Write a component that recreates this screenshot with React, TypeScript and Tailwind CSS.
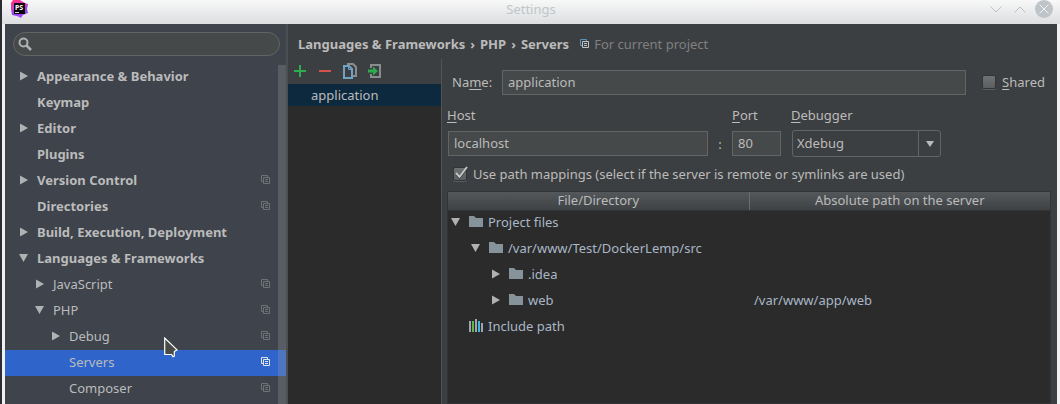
import React, { useState } from "react";

type NavItem = {
  label: string;
  level: 0 | 1 | 2;
  arrow?: "open" | "closed";
  project?: boolean;
  selected?: boolean;
};

const navItems: NavItem[] = [
  { label: "Appearance & Behavior", level: 0, arrow: "closed" },
  { label: "Keymap", level: 0 },
  { label: "Editor", level: 0, arrow: "closed" },
  { label: "Plugins", level: 0 },
  { label: "Version Control", level: 0, arrow: "closed", project: true },
  { label: "Directories", level: 0, project: true },
  { label: "Build, Execution, Deployment", level: 0, arrow: "closed" },
  { label: "Languages & Frameworks", level: 0, arrow: "open" },
  { label: "JavaScript", level: 1, arrow: "closed", project: true },
  { label: "PHP", level: 1, arrow: "open", project: true },
  { label: "Debug", level: 2, arrow: "closed", project: true },
  { label: "Servers", level: 2, project: true, selected: true },
  { label: "Composer", level: 2, project: true },
];

const navIndent = ["pl-[14px]", "pl-[30px]", "pl-[46px]"];

type FileRow = {
  label: string;
  level: 0 | 1 | 2;
  arrow?: "open" | "closed";
  icon: "folder" | "library";
  server?: string;
};

const fileRows: FileRow[] = [
  { label: "Project files", level: 0, arrow: "open", icon: "folder" },
  { label: "/var/www/Test/DockerLemp/src", level: 1, arrow: "open", icon: "folder" },
  { label: ".idea", level: 2, arrow: "closed", icon: "folder" },
  { label: "web", level: 2, arrow: "closed", icon: "folder", server: "/var/www/app/web" },
  { label: "Include path", level: 0, icon: "library" },
];

const fileIndent = ["pl-[3px]", "pl-[23px]", "pl-[43px]"];

function Arrow({ state }: { state?: "open" | "closed" }) {
  return (
    <svg className="size-[10px] shrink-0" viewBox="0 0 10 10" fill="#afb1b3" aria-hidden="true">
      {state === "closed" && <path d="M1 .5 9 5 1 9.500z" />}
      {state === "open" && <path d="M0 1h9L4.500 9z" />}
    </svg>
  );
}

function ProjectIcon({ front, back = front }: { front: string; back?: string }) {
  return (
    <svg className="size-[10px] shrink-0" viewBox="0 0 10 10" fill="none" aria-hidden="true">
      <path d="M2 6.500H.5v-6h6V2" stroke={back} />
      <path d="M2.500 2.500h6v6h-6zM4 4.500h3M4 6.500h3" stroke={front} />
    </svg>
  );
}

function FolderIcon() {
  return (
    <svg className="h-3 w-[14px] shrink-0" viewBox="0 0 14 12" fill="#87939a" aria-hidden="true">
      <path d="M0 0h5l2 2h7v9H0z" />
    </svg>
  );
}

function LibraryIcon() {
  return (
    <svg className="h-[14px] w-[14px] shrink-0" viewBox="0 0 14 14" aria-hidden="true">
      <path d="M0 2h2v11H0zM6 0h2v13H6zM12 4h2v9h-2z" fill="#9aa7b0" />
      <path d="M3 2h2v11H3z" fill="#62b543" />
      <path d="M9 2h2v11H9z" fill="#40b6e0" />
    </svg>
  );
}

function AppLogo() {
  return (
    <svg className="size-5 shrink-0" viewBox="0 0 20 20" role="img" aria-label="PhpStorm">
      <defs>
        <linearGradient id="logo" x1="0.3" y1="0" x2="0.6" y2="1">
          <stop offset="0" stopColor="#ff318c" />
          <stop offset="0.35" stopColor="#d93ac0" />
          <stop offset="0.7" stopColor="#8b45f8" />
          <stop offset="1" stopColor="#b74af7" />
        </linearGradient>
      </defs>
      <path d="M2 3 4 0h7l5 3 3 1-1 5 1 4-5 2-2 3-4-2-5-1-1-6z" fill="url(#logo)" />
      <path d="M5 3h11v11H5z" fill="#0b0508" />
      <text x="6" y="9.500" fontSize="7" fontWeight="700" fontFamily="Noto Sans, sans-serif" fill="#fff">
        PS
      </text>
      <path d="M6 12h4v1H6z" fill="#ddd" />
    </svg>
  );
}

function TitleBar() {
  return (
    <header className="grid h-6 grid-cols-[1fr_auto_1fr] items-start bg-linear-to-b from-[#f8f8f8] to-[#dcdee0] px-[7px]">
      <AppLogo />
      <h1 className="leading-[18px] text-[#c0c5c8]">Settings</h1>
      <div className="flex items-center justify-end gap-[6px]">
        <button type="button" aria-label="Minimize" className="flex size-[18px] items-center justify-center">
          <svg className="h-[7px] w-3" viewBox="0 0 12 7" fill="none" stroke="#bcc1c4">
            <path d="m.5.5 5.500 5.500 5.500-5.500" />
          </svg>
        </button>
        <button type="button" aria-label="Maximize" className="flex size-[18px] items-center justify-center">
          <svg className="h-[7px] w-3" viewBox="0 0 12 7" fill="none" stroke="#bcc1c4">
            <path d="M.5 6.500 6 1l5.500 5.500" />
          </svg>
        </button>
        <button type="button" aria-label="Close" className="size-[18px]">
          <svg className="size-[18px]" viewBox="0 0 18 18">
            <circle cx="9" cy="9" r="9" fill="#bec4c7" />
            <path d="m4.500 4.500 9 9m0-9-9 9" stroke="#f2f3f4" />
          </svg>
        </button>
      </div>
    </header>
  );
}

function Sidebar() {
  return (
    <aside className="relative flex w-[283px] shrink-0 flex-col border-r-2 border-[#4b4f54] bg-[#3e434c]">
      <label className="mt-2 mr-[6px] ml-2 flex h-6 items-center gap-2 rounded-full border border-[#646464] bg-[#45494a] pl-1">
        <svg className="size-[14px] shrink-0" viewBox="0 0 14 14" fill="none" stroke="#afb1b3" aria-hidden="true">
          <circle cx="5.500" cy="5.500" r="4" strokeWidth="2" />
          <path d="m8.500 8.500 4.500 4.500" strokeWidth="2.500" />
        </svg>
        <input type="search" aria-label="Search settings" className="min-w-0 flex-1 bg-transparent outline-none" />
      </label>
      <nav aria-label="Settings sections" className="mt-2">
        <ul>
          {navItems.map((item) => (
            <li key={item.label}>
              <button
                type="button"
                aria-current={item.selected ? "page" : undefined}
                className={`flex h-[26px] w-full items-center gap-2 pr-[15px] pb-[2px] text-left ${navIndent[item.level]} ${
                  item.level === 0 ? "font-bold" : ""
                } ${item.selected ? "bg-[#2f65ca]" : ""}`}
              >
                <Arrow state={item.arrow} />
                <span className="flex-1 whitespace-nowrap">{item.label}</span>
                {item.project && <ProjectIcon front={item.selected ? "#dfe3ea" : "#6c7278"} />}
              </button>
            </li>
          ))}
        </ul>
      </nav>
      <div className="absolute top-[41px] right-0 bottom-0 w-2 bg-[#a6a6a6]/25" />
      <svg className="absolute top-[313px] left-[159px] h-[21px] w-[14px]" viewBox="0 0 14 21" aria-hidden="true">
        <path d="M.7 1v16.500h6.800L9 19.700l1.300-.6v-4.600l2.700-1.700z" fill="#4a4a48" stroke="#fff" strokeWidth="1.200" />
      </svg>
    </aside>
  );
}

function ServerList() {
  const tool = "flex size-4 items-center justify-center";
  return (
    <section aria-label="Server list" className="flex w-[153px] shrink-0 flex-col">
      <div className="flex h-[25px] items-center gap-[9px] pb-[2px] pl-1">
        <button type="button" aria-label="Add" className={tool}>
          <svg className="size-4" viewBox="0 0 16 16" fill="none" stroke="#2fab4f" strokeWidth="2">
            <path d="M8 2v12M2 8h12" />
          </svg>
        </button>
        <button type="button" aria-label="Remove" className={tool}>
          <svg className="size-4" viewBox="0 0 16 16" fill="none" stroke="#d2544a" strokeWidth="2">
            <path d="M2 8h12" />
          </svg>
        </button>
        <button type="button" aria-label="Copy" className={tool}>
          <svg className="size-4" viewBox="0 0 16 16" fill="none">
            <path d="M5 1h6l3 3v9h-3" stroke="#8a8d8f" strokeWidth="2" />
            <path d="M2 3h5l3 3v9H2z" fill="#3c3f41" stroke="#6fa3c4" strokeWidth="2" />
            <path d="M6.500 3v3.500H10" stroke="#6fa3c4" />
          </svg>
        </button>
        <button type="button" aria-label="Import" className={tool}>
          <svg className="size-4" viewBox="0 0 16 16" fill="none">
            <path d="M4 5V2h9v12H4v-3" stroke="#8a8d8f" strokeWidth="2" />
            <path d="M1 6.500h5V3.500L11 8l-5 4.500v-3H1z" fill="#2fab4f" />
          </svg>
        </button>
      </div>
      <ul className="flex-1 bg-[#2b2b2b]">
        <li>
          <button type="button" className="h-[22px] w-full bg-[#0d293e] pl-[23px] text-left">
            application
          </button>
        </li>
      </ul>
    </section>
  );
}

function Mnemonic({ children }: { children: string }) {
  return <span className="underline decoration-1 underline-offset-2">{children}</span>;
}

const field = "h-[25px] min-w-0 border border-[#646464] bg-[#45494a] px-[5px] pb-[2px] outline-none";

function CheckBox({ id, checked, onChange }: { id: string; checked: boolean; onChange: (value: boolean) => void }) {
  return (
    <span className="relative size-[14px] shrink-0">
      <input
        id={id}
        type="checkbox"
        checked={checked}
        onChange={(e) => onChange(e.target.checked)}
        className="block size-[14px] appearance-none rounded-xs border border-[#323435] bg-linear-to-b from-[#6f7173] to-[#5c5e5f] shadow-[0_1px_0_#5a5d5f]"
      />
      {checked && (
        <svg
          className="pointer-events-none absolute -top-px left-0 size-[15px]"
          viewBox="0 0 15 15"
          fill="none"
          aria-hidden="true"
        >
          <path d="m3 8 3.500 4L14 2" stroke="#2e3031" strokeWidth="2" />
          <path d="m3 7 3.500 4L14 1" stroke="#c4c5c6" strokeWidth="2" />
        </svg>
      )}
    </span>
  );
}

function ServerForm() {
  const [name, setName] = useState("application");
  const [host, setHost] = useState("localhost");
  const [port, setPort] = useState("80");
  const [shared, setShared] = useState(false);
  const [mapped, setMapped] = useState(true);
  const head = "h-[18px] border-[#323435] bg-linear-to-b from-[#54585b] to-[#3f4244] p-0 font-normal leading-[17px]";

  return (
    <form className="flex min-w-0 flex-1 flex-col border-l border-[#515456] pt-[11px] pr-[6px] pl-[5px]">
      <div className="flex items-center pr-[6px] pl-[5px]">
        <label htmlFor="name" className="w-[50px] shrink-0 pb-[2px]">
          Na<Mnemonic>m</Mnemonic>e:
        </label>
        <input id="name" value={name} onChange={(e) => setName(e.target.value)} className={`${field} flex-1`} />
        <div className="ml-4 flex items-center gap-[6px] pb-px">
          <CheckBox id="shared" checked={shared} onChange={setShared} />
          <label htmlFor="shared">
            <Mnemonic>S</Mnemonic>hared
          </label>
        </div>
      </div>

      <div className="mt-[11px] grid grid-cols-[261px_24px_49px_149px] items-center gap-y-[6px]">
        <label htmlFor="host">
          <Mnemonic>H</Mnemonic>ost
        </label>
        <span />
        <label htmlFor="port">
          <Mnemonic>P</Mnemonic>ort
        </label>
        <label htmlFor="debugger" className="pl-[10px]">
          <Mnemonic>D</Mnemonic>ebugger
        </label>
        <input id="host" value={host} onChange={(e) => setHost(e.target.value)} className={`${field} ml-px`} />
        <span className="text-center">:</span>
        <input id="port" value={port} onChange={(e) => setPort(e.target.value)} className={field} />
        <div className="relative ml-[11px] w-[149px]">
          <select
            id="debugger"
            defaultValue="Xdebug"
            className="block h-[27px] w-full appearance-none rounded-[3px] border border-[#646464] bg-[#3c3f41] px-1 pb-[2px] outline-none"
          >
            <option>Xdebug</option>
            <option>Zend Debugger</option>
          </select>
          <span className="pointer-events-none absolute inset-y-0 right-0 flex w-[23px] items-center justify-center border-l border-[#646464]">
            <svg className="h-[6px] w-2" viewBox="0 0 8 6" fill="#bbbbbb" aria-hidden="true">
              <path d="M0 0h8L4 6z" />
            </svg>
          </span>
        </div>
      </div>

      <div className="mt-2 flex items-center gap-[6px] pl-[6px]">
        <CheckBox id="mappings" checked={mapped} onChange={setMapped} />
        <label htmlFor="mappings">Use path mappings (select if the server is remote or symlinks are used)</label>
      </div>

      <div className="mt-2 flex-1 border border-[#323435] bg-[#2b2b2b]">
        <table className="w-full table-fixed border-collapse">
          <thead>
            <tr>
              <th className={`${head} border-r border-r-[#6a6d6f] border-b`}>File/Directory</th>
              <th className={`${head} border-b`}>Absolute path on the server</th>
            </tr>
          </thead>
          <tbody className="text-[#a9b7c6]">
            {fileRows.map((row) => (
              <tr key={row.label} className="h-[26px]">
                <td className="p-0 pb-[2px]">
                  <div className={`flex items-center ${fileIndent[row.level]}`}>
                    <Arrow state={row.arrow} />
                    <span className="mr-[5px] ml-2">{row.icon === "folder" ? <FolderIcon /> : <LibraryIcon />}</span>
                    <span className="whitespace-nowrap">{row.label}</span>
                  </div>
                </td>
                <td className="p-0 pb-[2px] pl-[5px]">{row.server}</td>
              </tr>
            ))}
          </tbody>
        </table>
      </div>
    </form>
  );
}

export default function App() {
  return (
    <div className="flex min-h-screen bg-[#2b2d30] pl-[2px] font-['Noto_Sans',sans-serif] text-[13px] leading-[18px] text-[#bbbbbb]">
      <div className="flex min-w-0 flex-1 flex-col bg-[#eff0f1]">
        <TitleBar />
        <div className="flex flex-1 px-[3px]">
          <Sidebar />
          <main className="flex min-w-0 flex-1 flex-col bg-[#3c3f41]">
            <div className="flex h-[35px] items-center pt-1 pl-[10px]">
              <h2 className="flex gap-[5px] font-bold">
                <span>Languages &amp; Frameworks</span>
                <span>›</span>
                <span>PHP</span>
                <span>›</span>
                <span>Servers</span>
              </h2>
              <span className="ml-[11px] flex items-center gap-1 text-[#808080]">
                <ProjectIcon front="#c0c4c7" back="#5b93b5" />
                For current project
              </span>
            </div>
            <div className="flex flex-1">
              <ServerList />
              <ServerForm />
            </div>
          </main>
        </div>
      </div>
    </div>
  );
}
